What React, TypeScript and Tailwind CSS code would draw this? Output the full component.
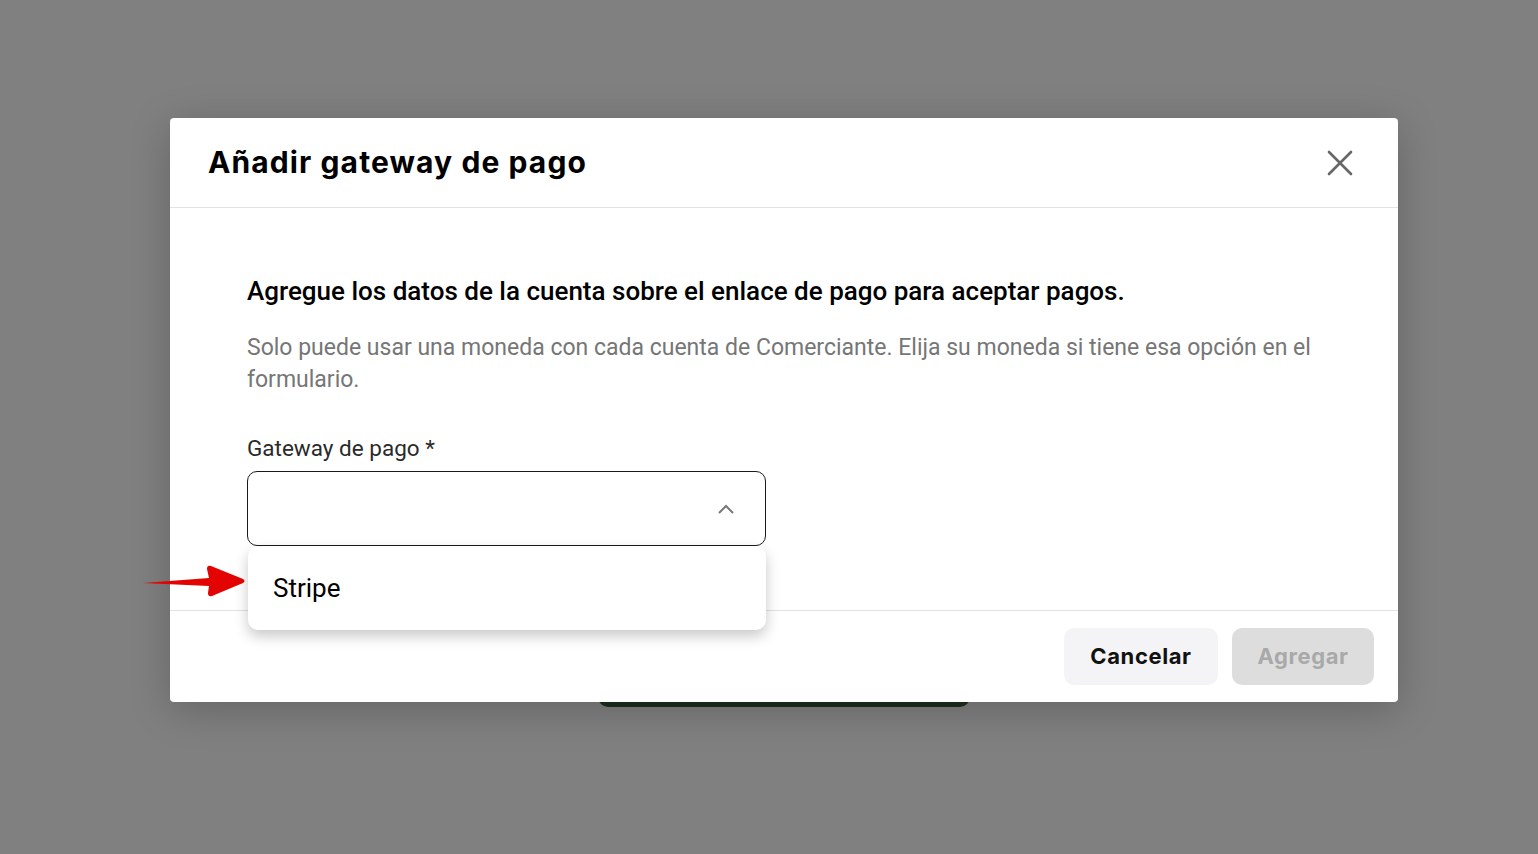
import React from 'react';

const roboto = { fontFamily: 'Roboto, "Noto Sans", sans-serif' };
const display = { fontFamily: 'Inter, "Noto Sans", sans-serif' };

const CloseIcon = () => (
  <svg width="28" height="28" viewBox="0 0 28 28" fill="none">
    <path d="M3 3L25 25M25 3L3 25" stroke="#666" strokeWidth="2.6" strokeLinecap="round" />
  </svg>
);

const ChevronUp = () => (
  <svg width="18" height="12" viewBox="0 0 18 12" fill="none">
    <path d="M2 10L9 3L16 10" stroke="#777" strokeWidth="2" />
  </svg>
);

// red pointer drawn next to the open option
const PointerArrow = () => (
  <svg width="104" height="36" viewBox="0 0 104 36">
    <path
      d="M0 20 L66 15 L64 6 Q64 2 68 3 L100 16 Q103 18 100 20 L69 33 Q65 34 65 30 L66 23 Z"
      fill="#e40303"
    />
  </svg>
);

export default function App() {
  return (
    <div className="relative w-full h-[854px] bg-[#808080] overflow-hidden">
      {/* page content behind the overlay */}
      <div className="pt-[650px] pl-[598px]">
        <div className="w-[372px] h-[57px] rounded-[10px] bg-[#1b301e]" />
      </div>

      <div className="absolute left-[170px] top-[118px] w-[1228px] h-[584px] bg-white rounded-[4px] shadow-[0_8px_40px_rgba(0,0,0,0.22)] flex flex-col">
        <div className="h-[90px] flex items-center justify-between pl-[38px] pr-[44px] border-b border-[#e2e2e2]">
          <h2 className="text-[30px] font-bold text-black tracking-[1.1px] -mt-[1px]" style={display}>
            Añadir gateway de pago
          </h2>
          <button className="mt-[1px]">
            <CloseIcon />
          </button>
        </div>

        <div className="flex-1 px-[77px] pt-[67px]" style={roboto}>
          <p className="text-[26px] font-medium text-black leading-[32px]">
            Agregue los datos de la cuenta sobre el enlace de pago para aceptar pagos.
          </p>
          <p className="mt-[25px] text-[23px] leading-[32px] text-[#767676]">
            Solo puede usar una moneda con cada cuenta de Comerciante. Elija su moneda si tiene esa opción en el formulario.
          </p>
          <label className="block mt-[38px] text-[22.5px] leading-[28px] text-[#2a2a2a]">Gateway de pago *</label>
          <div className="relative mt-[9px] w-[519px]">
            <div className="h-[75px] border border-[#1a1a1a] rounded-[10px] flex items-center justify-end pr-[30px]">
              <ChevronUp />
            </div>
            <div className="absolute left-[1px] top-[75px] w-[518px] h-[84px] bg-white rounded-[10px] shadow-[0_6px_14px_rgba(0,0,0,0.22)] flex items-center pl-[25px] z-10">
              <span className="text-[26px] text-black">Stripe</span>
            </div>
            <div className="absolute left-[-104px] top-[92px]">
              <PointerArrow />
            </div>
          </div>
        </div>

        <div className="h-[92px] border-t border-[#e2e2e2] flex items-center justify-end gap-[14px] pr-[24px]">
          <button
            className="w-[154px] h-[57px] rounded-[10px] bg-[#f4f4f6] text-[22px] font-bold text-[#111] tracking-[0.6px]"
            style={display}
          >
            Cancelar
          </button>
          <button
            className="w-[142px] h-[57px] rounded-[10px] bg-[#dddddd] text-[22px] font-bold text-[#a9a9a9] tracking-[0.6px]"
            style={display}
          >
            Agregar
          </button>
        </div>
      </div>
    </div>
  );
}
